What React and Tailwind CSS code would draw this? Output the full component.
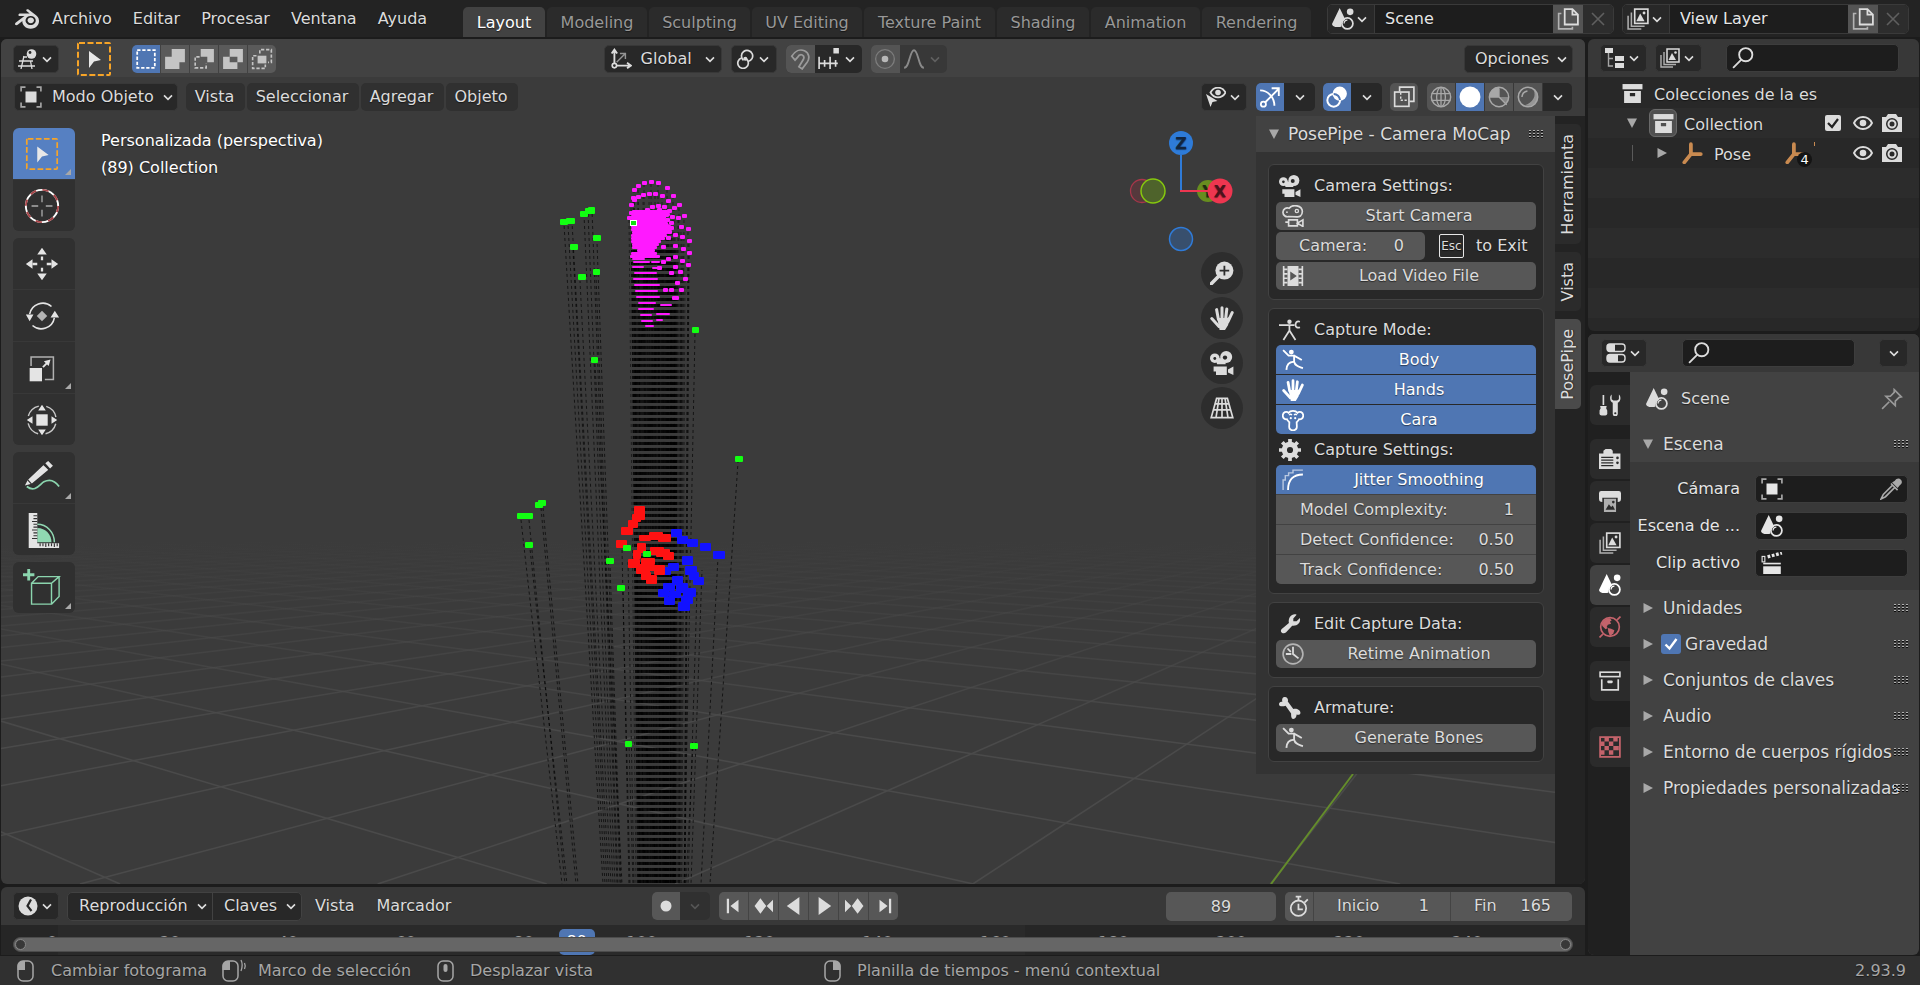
import React from 'react';
import { SiBlender } from 'react-icons/si';

/* ---------- icons (20 x 20 grid, drawn in the current text colour) ---------- */

const line = { fill: 'none', stroke: 'currentColor' };

const shapes = {
    chevron: <path d="M5 8l5 5 5-5" {...line} strokeWidth="2" />,
    view3d: (
        <>
            <path d="M1 12h14M0 17h17M6 7L3 20M12.5 12L14 20M5 8h4" {...line} strokeWidth="1.3" />
            <circle cx="13.5" cy="5" r="4.8" fill="currentColor" />
            <circle cx="12" cy="3.5" r="1.4" fill="#282828" />
        </>
    ),
    selNew: <rect x="2" y="2" width="16" height="16" {...line} strokeWidth="1.6" strokeDasharray="3 1.6" />,
    selAdd: <path d="M7 1h12v12h-5v6H1V8h6z" fill="currentColor" />,
    selSub: (
        <>
            <path d="M7 1h12v12h-6V8H7z" fill="currentColor" />
            <path d="M6 8H2v10h10v-4" {...line} strokeWidth="1.5" strokeDasharray="3 1.6" />
        </>
    ),
    selDiff: <path fillRule="evenodd" d="M7 1h12v12h-5v6H1V8h6zM7 8v5h7V8z" fill="currentColor" />,
    selAnd: (
        <>
            <rect x="6" y="7" width="8" height="7" fill="currentColor" />
            <path d="M8 5V1.5h10.5V13h-3M5 7H1.5v11.5H13V15" {...line} strokeWidth="1.5" strokeDasharray="3 1.6" />
        </>
    ),
    axes: (
        <>
            <path d="M4 14V2M1.5 5L4 1.5 6.5 5M6 16h12M15.5 13.5L19 16l-3.5 2.5" {...line} strokeWidth="1.7" />
            <circle cx="4" cy="16" r="2" {...line} strokeWidth="1.5" />
            <path d="M6 13l7.5-7.5M9 5h5v5" {...line} strokeWidth="1.3" opacity=".6" />
        </>
    ),
    pivot: (
        <>
            <path d="M8.500 11.300A5.600 5.600 0 1 1 13 12.500" {...line} strokeWidth="1.700" />
            <path d="M12 9.500A5.300 5.300 0 1 1 7 8.500" {...line} strokeWidth="1.700" transform="translate(-.5 .5)" />
            <circle cx="10.300" cy="9.800" r="2" fill="currentColor" />
        </>
    ),
    magnet: (
        <path d="M2.5 7.5C5.5 2.5 10 .8 14 2.5c4.500 2 5 7 2.500 10.500L12 19l-3-2 4-6.500c1-2 .4-3.500-1-4.200-1.500-.7-3 0-4.500 2.500L5.500 11z" {...line} strokeWidth="1.6" />
    ),
    snapInc: (
        <>
            <path d="M1 8v11M6 11v6M11 8v11M16 11v6M1 14h17" {...line} strokeWidth="1.5" />
            <rect x="14" y="0" width="5" height="5" fill="currentColor" />
        </>
    ),
    propEdit: (
        <>
            <circle cx="10" cy="10" r="8.5" {...line} strokeWidth="1.2" opacity=".4" />
            <circle cx="10" cy="10" r="3" fill="currentColor" />
        </>
    ),
    falloff: <path d="M1 18c5 0 5-16 9-16s4 16 9 16" {...line} strokeWidth="1.7" />,
    object: (
        <>
            <rect x="5" y="5" width="10" height="10" fill="currentColor" />
            <path d="M1 5V1h4M15 1h4v4M19 15v4h-4M5 19H1v-4" {...line} strokeWidth="1.5" opacity=".7" />
        </>
    ),
    eyeCursor: (
        <>
            <path d="M4.5 5.5C8-1 16-1 19.5 5.5 16 12 8 12 4.5 5.5z" {...line} strokeWidth="1.8" />
            <circle cx="12" cy="5.5" r="2.8" fill="currentColor" />
            <path d="M0 7l4.500 13 2-5 5-1z" fill="currentColor" />
        </>
    ),
    gizmo: (
        <>
            <path d="M1 4c7 0 13 6 13 14" {...line} strokeWidth="1.7" />
            <path d="M5.500 15L18 2.500M11.500 2H18v7" {...line} strokeWidth="1.7" />
            <circle cx="4" cy="16.5" r="2.3" {...line} strokeWidth="1.6" />
        </>
    ),
    overlays: (
        <>
            <circle cx="12.5" cy="7" r="6.5" fill="currentColor" />
            <circle cx="7" cy="13" r="5.8" {...line} strokeWidth="1.8" />
            <path d="M7 7.200a5.800 5.800 0 0 1 5.700 5.600" fill="none" stroke="#4f76b3" strokeWidth="1.8" />
        </>
    ),
    xray: (
        <>
            <path d="M6 5V1h13v13h-4" {...line} strokeWidth="1.5" />
            <rect x="1.5" y="5.5" width="13" height="13" {...line} strokeWidth="1.5" />
            <path d="M7 6v7h7" {...line} strokeWidth="1.3" strokeDasharray="2 1.5" />
        </>
    ),
    wire: (
        <>
            <circle cx="10" cy="10" r="8.8" {...line} strokeWidth="1.3" />
            <ellipse cx="10" cy="10" rx="4" ry="8.8" {...line} strokeWidth="1.2" />
            <path d="M1.500 7h17M1.500 13h17M10 1v18" {...line} strokeWidth="1.2" />
        </>
    ),
    solid: <circle cx="10" cy="10" r="9.5" fill="currentColor" />,
    material: (
        <>
            <circle cx="10" cy="10" r="8.8" {...line} strokeWidth="1.3" />
            <path d="M10 1v9H1a9 9 0 0 1 9-9z" fill="currentColor" />
            <path d="M10 10h9a9 9 0 0 1-3 6.700z" fill="currentColor" opacity=".6" />
            <path d="M10 10l7 7M1.500 10H10v-8" {...line} strokeWidth="1.2" />
        </>
    ),
    rendered: (
        <>
            <circle cx="10" cy="10" r="8.8" {...line} strokeWidth="1.4" />
            <path d="M4.500 10a6 6 0 0 1 5-5.500" {...line} strokeWidth="1.4" />
            <path d="M15 3.500c3 6-1 12-8 14 6 2 12-2 11.500-8C18.500 6 17 4.500 15 3.500z" fill="currentColor" opacity=".8" />
        </>
    ),
    scene: (
        <>
            <path d="M7 0l5 10.500a6 6 0 0 0-3.500 6.500C4 18 0 17 0 14.500z" fill="currentColor" />
            <circle cx="16.5" cy="3.5" r="3" fill="currentColor" />
            <circle cx="14" cy="14" r="5" {...line} strokeWidth="1.6" />
            <path d="M11 14a3 3 0 0 1 3-3" {...line} strokeWidth="1.2" />
        </>
    ),
    layers: (
        <>
            <rect x="7" y="1" width="12" height="13" {...line} strokeWidth="1.5" />
            <path d="M8.500 12l3.500-7 4 7z" fill="currentColor" />
            <circle cx="15.5" cy="4.5" r="1.3" fill="currentColor" />
            <path d="M4 4v12.500h12M1 7v12h12" {...line} strokeWidth="1.4" opacity=".75" />
        </>
    ),
    copy: (
        <>
            <path d="M7 1h7l5 5v9H7zM14 1v5h5" {...line} strokeWidth="1.6" />
            <path d="M4 5H1.500v14H14v-2" {...line} strokeWidth="1.5" opacity=".7" />
        </>
    ),
    close: <path d="M4 4l12 12M16 4L4 16" {...line} strokeWidth="1.6" />,
    tree: (
        <>
            <rect x="0" y="0" width="8" height="5" fill="currentColor" />
            <rect x="10" y="8" width="9" height="5" fill="currentColor" />
            <rect x="10" y="15" width="9" height="5" fill="currentColor" />
            <path d="M3.500 5v13H8M3.500 10.500H8" {...line} strokeWidth="1.4" opacity=".7" />
        </>
    ),
    search: (
        <>
            <circle cx="12.5" cy="7" r="6" {...line} strokeWidth="1.7" />
            <path d="M8.500 11.500L1 19" {...line} strokeWidth="1.7" />
        </>
    ),
    collection: (
        <>
            <rect x="0.5" y="1" width="19" height="5" fill="currentColor" />
            <path fillRule="evenodd" d="M2 7.500h16V19H2zM7.500 9.500v3h5v-3z" fill="currentColor" />
        </>
    ),
    box: (
        <>
            <rect x="1" y="2" width="18" height="4" {...line} strokeWidth="1.5" />
            <path d="M2.500 8.500V18h15V8.500" {...line} strokeWidth="1.5" />
            <rect x="7.5" y="9.5" width="5" height="2.5" rx="1" fill="currentColor" />
        </>
    ),
    eye: (
        <>
            <path d="M1 10c4-8 14-8 18 0-4 8-14 8-18 0z" {...line} strokeWidth="1.9" />
            <circle cx="10" cy="10" r="3.3" fill="currentColor" />
        </>
    ),
    photo: (
        <>
            <path fillRule="evenodd" d="M0 4h4l2-3h8l2 3h4v15H0zM10 5a6 6 0 1 0 0 12 6 6 0 0 0 0-12z" fill="currentColor" />
            <circle cx="10" cy="11" r="3.5" {...line} strokeWidth="2" />
        </>
    ),
    empty: <path d="M9 2v9M9 11h9M9 11l-6 7.500" {...line} strokeWidth="3.4" strokeLinecap="round" />,
    toggles: (
        <>
            <rect x="1" y="1" width="18" height="7.5" rx="3" {...line} strokeWidth="1.4" />
            <path d="M4 1h5v7.500H4a3 3 0 0 1-3-3V4a3 3 0 0 1 3-3z" fill="currentColor" />
            <rect x="1" y="11.5" width="18" height="7.5" rx="3" {...line} strokeWidth="1.4" />
            <path d="M4 11.500h8V19H4a3 3 0 0 1-3-3v-1.500a3 3 0 0 1 3-3z" fill="currentColor" />
        </>
    ),
    tools: (
        <>
            <path d="M4 1v9" {...line} strokeWidth="1.5" />
            <path d="M1 11h6l-.5 2 1 2v2a2 2 0 0 1-2 2.500h-3A2 2 0 0 1 .5 17v-2l1-2z" fill="currentColor" />
            <path fillRule="evenodd" d="M11.500.5C9.500 2 9.500 6.500 12.500 8v10a2.300 2.300 0 0 0 4.600 0V8c3-1.500 3-6 1-7.500v4.200l-1.600 1.300h-3.400l-1.600-1.300zM14.800 16.500a1 1 0 1 0 0 2 1 1 0 0 0 0-2z" fill="currentColor" />
        </>
    ),
    render: (
        <>
            <path d="M4 5V2.500L6 1h5l1.500 1.500V5H19.500v14H0V5zM16.500 2.500h3" fill="currentColor" />
            <path d="M2 8.500h11M2 11h11M2 13.500h11M2 16h11" stroke="#2b2b2b" strokeWidth="1.2" />
            <circle cx="16.8" cy="9" r="1.2" fill="#2b2b2b" />
            <circle cx="16.8" cy="13.5" r="1.2" fill="#2b2b2b" />
        </>
    ),
    printer: (
        <>
            <path d="M2 1h16a2 2 0 0 1 2 2v5a3 3 0 0 1-3 3V7H3v4a3 3 0 0 1-3-3V3a2 2 0 0 1 2-2z" fill="currentColor" />
            <path d="M4.500 8h11v12h-11z" fill="currentColor" opacity=".75" />
            <path d="M6 18l3-5 2 2.500 1.500-1.500 2 4z" fill="#2b2b2b" />
            <circle cx="13" cy="11" r="1.2" fill="#2b2b2b" />
        </>
    ),
    world: (
        <>
            <circle cx="10" cy="10" r="8.5" {...line} strokeWidth="1.5" />
            <path d="M2.500 7C4 3.500 7 2 10 2l1.500 2L10 5l1 2-3 1-1 2 1 1-2 1-3-3z" fill="currentColor" />
            <path d="M8 11l3 .500 3 1.500-1 3-3 2.500-1.500-4z" fill="currentColor" />
            <path d="M.5 19.500l3-3M16.500 3.500l3-3" {...line} strokeWidth="1.5" />
        </>
    ),
    texture: (
        <>
            <rect x="1" y="1" width="18" height="18" {...line} strokeWidth="1.6" />
            <path d="M5 1h4v4H5zM13 1h4v4h-4zM1 5h4v4H1zM9 5h4v4H9zM5 9h4v4H5zM13 9h5v4h-5zM1 13h4v4H1zM9 13h4v4H9z" fill="currentColor" />
        </>
    ),
    pin: <path d="M12 1.500l6.500 6.500-2 .5-3.500 3.500v4l-3-3-2.500-2.500L4.500 7.500h4L12 4zM7.500 12.500L1 19" {...line} strokeWidth="1.5" />,
    dropper: (
        <>
            <path d="M11 4l2.500-1.500C15 0 17.500 0 19 1.500s1 4-1 5L16 9z" fill="currentColor" />
            <path d="M11.500 6.500L3 15l-2 4 4-2 8.500-8.500M10 5l6 6" {...line} strokeWidth="1.5" />
        </>
    ),
    clip: (
        <>
            <rect x="2" y="13" width="16" height="7" fill="currentColor" />
            <path d="M2 10.500h16" {...line} strokeWidth="1.5" />
            <rect x="1" y="4" width="2.5" height="5" {...line} strokeWidth="1" />
            <path d="M6 4.500L19 .8" {...line} strokeWidth="3" strokeDasharray="2.5 1.5" />
        </>
    ),
    movie: (
        <>
            <circle cx="4" cy="6" r="4" fill="currentColor" />
            <circle cx="13.5" cy="5" r="5" fill="currentColor" />
            <path d="M4 6h9v5H6z" fill="currentColor" />
            <circle cx="4" cy="6.2" r="1.2" fill="#282828" />
            <circle cx="12.5" cy="5.5" r="1.8" fill="#282828" />
            <path d="M3 13h11v7H5v-3H3zM15 15.500l4.500-2.500v7L15 18z" fill="currentColor" />
        </>
    ),
    movieLine: (
        <>
            <path d="M6 10.500a4 4 0 1 1 .5-7.500c3-4 12-3 12 3 0 4-3 5-5 4.800z" {...line} strokeWidth="1.5" />
            <circle cx="13.5" cy="5.5" r="1.5" {...line} strokeWidth="1.2" />
            <circle cx="4.5" cy="6.5" r=".8" fill="currentColor" />
            <path d="M6 13.500h8v5.500H6zM3 15.500h3M14 16.500l5-3v6z" {...line} strokeWidth="1.5" />
        </>
    ),
    film: (
        <>
            <path d="M1.500 1v18M18.500 1v18M1 4h4M1 8h4M1 12h4M1 16h4M15 4h4M15 8h4M15 12h4M15 16h4" {...line} strokeWidth="1.5" />
            <path fillRule="evenodd" d="M5 1h10v18H5zM7.500 6v8l6-4z" fill="currentColor" />
        </>
    ),
    pose: (
        <>
            <circle cx="9.5" cy="2.5" r="2" fill="currentColor" />
            <path d="M0 5.500h9.500v5L4 19M9.500 5.500H14M9.500 10.500L15 19M19 2.500c-3-1-4 1-4 3s2 3 4 2" {...line} strokeWidth="1.6" />
        </>
    ),
    runner: (
        <>
            <circle cx="8.5" cy="2.8" r="2.2" fill="currentColor" />
            <path d="M1 1l5 5h5v5.500M11 6l7 4M11 11.500C6 12 4.500 14 4 19M11 11.500c1 4 4 4.500 8 6" {...line} strokeWidth="1.7" />
        </>
    ),
    hand: (
        <>
            <path d="M6 10l8 0 3-1-2 7-2.500 4H8z" fill="currentColor" />
            <path d="M7 11L5.500 3M10 11V1.500M13 11l1-8.500M15 13l3.500-7.500M7.500 17L1.500 10.500" {...line} strokeWidth="2.5" strokeLinecap="round" />
        </>
    ),
    monkey: (
        <>
            <path d="M6 3.500C7.500 1 12.500 1 14 3.500c2-2 5.300-.5 5.300 2.500 0 2.500-1.800 3.500-3.800 3.300-.5 1.200-1.500 2-2.200 2.700l.2 4c0 4.500-7 4.500-7 0l.2-4c-.700-.7-1.700-1.500-2.200-2.700C2.500 9.500.7 8.500.7 6 .7 3 4 1.500 6 3.500z" {...line} strokeWidth="1.6" />
            <path d="M6.500 5.500c.7-1 1.800-1 2.500 0M11 5.500c.7-1 1.800-1 2.500 0" {...line} strokeWidth="1.2" />
            <circle cx="8" cy="8.300" r="1" fill="currentColor" />
            <circle cx="12" cy="8.300" r="1" fill="currentColor" />
        </>
    ),
    gear: (
        <>
            <circle cx="10" cy="10" r="5" {...line} strokeWidth="5" />
            <path d="M10 0v20M0 10h20M3 3l14 14M17 3L3 17" stroke="currentColor" strokeWidth="3.4" />
            <circle cx="10" cy="10" r="2.8" fill="#282828" />
        </>
    ),
    smooth: (
        <>
            <path d="M5.500 19C5.500 10 10 5 19 5" {...line} strokeWidth="1.7" />
            <path d="M1 19V10h2V6h3V3.500h4V1h9" {...line} strokeWidth="1.3" opacity=".6" />
        </>
    ),
    wrench: (
        <path d="M2.500 14.500L9 9C8 4 12 0 16 1.500L13 5v2.500h3L19 4.500C20 9 16.500 12 12 11.500L6.500 17.500c-2.500 2.500-6.500-.5-4-3z" fill="currentColor" />
    ),
    clock: (
        <>
            <circle cx="10" cy="10" r="9" {...line} strokeWidth="1.5" opacity=".7" />
            <path d="M10 3.500V10l5 4M8.500 10H3.500M8 8L5 5" {...line} strokeWidth="1.6" />
        </>
    ),
    bone: (
        <path d="M5 0a3 3 0 0 1 3 4l5 7c3-1 6.500 1 6.500 3.500 0 1.500-2 2-3.500 1.500 0 2-1 4-3 4s-2-3-2-5L6 8C3 9 0 8.500 0 6.500 0 5 1.500 4 3 4.500 2.500 2.500 3 0 5 0z" fill="currentColor" />
    ),
    zoom: (
        <>
            <circle cx="12" cy="8" r="7.5" fill="currentColor" />
            <path d="M7 13l-6 6" {...line} strokeWidth="3" strokeLinecap="round" />
            <path d="M12 4v8M8 8h8" stroke="#2d2d2d" strokeWidth="1.5" />
        </>
    ),
    persp: (
        <path d="M5.500 2h9L19 18H1zM10 2v16M4.500 6.500h11M3 11.500h14M7.500 2L5 18M12.500 2L15 18" {...line} strokeWidth="1.4" />
    ),
    time: (
        <>
            <circle cx="10" cy="10" r="9.5" fill="currentColor" />
            <path d="M13 3.500L9.500 10l4 5" fill="none" stroke="#282828" strokeWidth="2.2" />
        </>
    ),
    stopwatch: (
        <>
            <circle cx="9.5" cy="12" r="7" {...line} strokeWidth="1.6" />
            <path d="M7 1.500h5M9.500 1.500V5M15 7l3-3M9.500 8v5h4" {...line} strokeWidth="1.6" />
        </>
    ),
    record: <circle cx="10" cy="10" r="5.5" fill="currentColor" />,
    first: <path d="M2 2h2.500v16H2zM15 3v14l-9-7z" fill="currentColor" />,
    prevKey: <path d="M6 1.500l6.500 8.500L6 18.500-.5 10zM20 3v14l-7-7z" fill="currentColor" />,
    playBack: <path d="M16 0v20L2 10z" fill="currentColor" />,
    play: <path d="M4 0v20l14-10z" fill="currentColor" />,
    nextKey: <path d="M14 1.500l6.500 8.500-6.500 8.500L7.500 10zM0 3v14l7-7z" fill="currentColor" />,
    last: <path d="M15.500 2H18v16h-2.500zM5 3v14l9-7z" fill="currentColor" />,
};

const Icon = ({ name, className = 'size-5' }) => (
    <svg viewBox="0 0 20 20" className={`shrink-0 ${className}`} aria-hidden="true">
        {shapes[name]}
    </svg>
);

const Chevron = ({ className = '' }) => <Icon name="chevron" className={`size-4 ${className}`} />;

const Mouse = ({ button, drag }) => (
    <svg viewBox="0 0 26 24" className="h-6 w-[26px] shrink-0" aria-hidden="true">
        <rect x="2" y="2" width="15" height="20" rx="5" fill="none" stroke="currentColor" strokeWidth="1.5" />
        {button === 'left' && <path d="M1.500 11V7a5 5 0 0 1 5-5H9v9z" fill="currentColor" />}
        {button === 'right' && <path d="M17.500 11V7a5 5 0 0 0-5-5H10v9z" fill="currentColor" />}
        {button === 'middle' && <rect x="7.500" y="5" width="4" height="8" rx="2" fill="currentColor" />}
        {drag && <path d="M20 1c1.500 3 1.500 7 0 11M23.500 4c1 2 1 4 0 6" fill="none" stroke="currentColor" strokeWidth="1.3" />}
    </svg>
);

/* ---------- small building blocks ---------- */

const menuBtn = 'flex h-7 items-center rounded-[5px] border border-[#383838] bg-[#282828]';
const field = 'h-7 rounded-[5px] border border-[#3d3d3d] bg-[#1d1d1d]';

const IconMenu = ({ icon, label, className = 'w-[46px]' }) => (
    <button aria-label={label} className={`${menuBtn} justify-center gap-px ${className}`}>
        <Icon name={icon} />
        <Chevron />
    </button>
);

const Grip = () => (
    <svg viewBox="0 0 15 8" className="ml-auto h-2 w-[15px] shrink-0" shapeRendering="crispEdges" aria-hidden="true">
        {[0, 4, 8, 12].map((x) => (
            <g key={x}>
                <path d={`M${x} 1.500h2M${x} 4.500h2M${x} 7.500h2`} stroke="#0c0c0c" />
                <path d={`M${x} 0.500h2M${x} 3.500h2M${x} 6.500h2`} stroke="#b0b0b0" />
            </g>
        ))}
    </svg>
);

const Triangle = ({ open }) => (
    <svg viewBox="0 0 10 10" className="size-2.5 shrink-0 text-[#a8a8a8]" aria-hidden="true">
        <path d={open ? 'M0 0.500h10L5 10z' : 'M0.500 0v10L10 5z'} fill="currentColor" />
    </svg>
);

/* ---------- top bar ---------- */

const menus = ['Archivo', 'Editar', 'Procesar', 'Ventana', 'Ayuda'];

const workspaces = [
    ['Layout', 'w-[82px]'],
    ['Modeling', 'w-[100px]'],
    ['Sculpting', 'w-[101px]'],
    ['UV Editing', 'w-[110px]'],
    ['Texture Paint', 'w-[131px]'],
    ['Shading', 'w-[92px]'],
    ['Animation', 'w-[109px]'],
    ['Rendering', 'w-[109px]'],
];

const DataBlock = ({ icon, value }) => (
    <div className="flex h-[30px] w-[287px] overflow-hidden rounded-[5px] border border-[#3a3a3a] bg-[#1d1d1d]">
        <button aria-label={`Browse ${value}`} className="flex w-[47px] items-center justify-center border-r border-[#3a3a3a] bg-[#282828]">
            <Icon name={icon} className="size-[22px]" />
            <Chevron />
        </button>
        <input aria-label={value} defaultValue={value} className="w-0 min-w-0 flex-1 bg-transparent px-2.5 text-[#e6e6e6]" />
        <button aria-label={`New ${value}`} className="flex w-[30px] items-center justify-center bg-[#545454]">
            <Icon name="copy" className="size-[22px]" />
        </button>
        <button aria-label={`Remove ${value}`} className="flex w-[30px] items-center justify-center bg-[#2d2d2d] text-[#5f5f5f]">
            <Icon name="close" />
        </button>
    </div>
);

const TopBar = () => (
    <header className="flex h-[37px] shrink-0 bg-[#232323] pl-[15px]">
        <SiBlender className="mt-[7px] size-6 shrink-0 text-[#dcdcdc]" />
        <nav className="ml-[13px] flex h-[38px] w-[411px] items-center gap-[21px]">
            {menus.map((m) => (
                <button key={m}>{m}</button>
            ))}
        </nav>
        <div role="tablist" className="flex gap-0.5 pt-[7px]">
            {workspaces.map(([name, width], i) => (
                <button
                    key={name}
                    role="tab"
                    aria-selected={i === 0}
                    className={`h-[30px] whitespace-nowrap rounded-t-[5px] pt-0.5 ${width} ${i === 0 ? 'bg-[#424242] text-white' : 'bg-[#2b2b2b] text-[#989898]'}`}
                >
                    {name}
                </button>
            ))}
        </div>
        <div className="ml-auto flex gap-2 pr-[11px] pt-1">
            <DataBlock icon="scene" value="Scene" />
            <DataBlock icon="layers" value="View Layer" />
        </div>
    </header>
);

/* ---------- 3D viewport ---------- */

const HORIZON = 485;
const gridB = Array.from({ length: 34 }, (_, i) => 80 + 297.6 * (i - 28));
const gridA = Array.from({ length: 34 }, (_, i) => 120 + 426.7 * (i - 1));

// Tracker helpers: every point hangs on a dashed line down to its parent.
const strings = [
    [564, 224, 603], [568, 224, 605], [572, 222, 609], [573, 250, 607], [580, 281, 611],
    [584, 214, 613], [588, 212, 615], [592, 210, 617], [597, 242, 620], [596, 275, 618], [595, 363, 622],
    [521, 520, 562], [529, 520, 565], [530, 549, 567], [541, 508, 576], [543, 508, 578],
    [610, 565, 621], [622, 548, 629], [623, 592, 630], [628, 560, 634], [629, 745, 633],
    [695, 333, 684], [738, 462, 710], [718, 557, 701], [702, 570, 691], [697, 590, 688], [693, 745, 686],
];

const faceOutline = [
    [634, 190], [638, 186], [644, 183], [651, 182], [658, 183], [667, 188], [673, 196], [679, 205],
    [684, 216], [688, 229], [689, 241], [689, 253], [688, 265], [685, 279], [681, 290], [676, 298],
    [633, 198], [638, 197], [643, 195], [649, 194], [655, 194], [662, 196], [668, 201], [674, 208],
    [678, 218], [681, 227], [682, 237], [683, 249], [682, 261], [680, 272], [677, 283], [671, 290],
    [631, 205], [634, 200], [652, 207], [658, 206], [664, 207], [669, 211], [672, 217], [671, 228],
    [675, 235], [675, 246], [675, 257], [675, 267], [671, 273], [665, 290], [631, 213], [629, 218],
    [663, 247], [668, 259], [663, 262], [659, 268], [667, 220], [661, 212], [671, 223], [674, 298],
    [647, 210], [654, 212], [659, 210], [666, 215], [669, 232], [666, 226], [668, 238],
];

const faceRows = [
    [632, 210, 38], [631, 213, 39], [630, 216, 36], [631, 219, 37], [630, 222, 38], [631, 225, 40],
    [631, 228, 39], [632, 231, 36], [631, 234, 36], [631, 237, 34], [631, 240, 30], [632, 243, 27],
    [632, 246, 25], [637, 249, 18], [631, 252, 26], [630, 255, 30], [632, 258, 13], [651, 261, 9],
    [633, 261, 17], [632, 266, 12], [652, 267, 10], [634, 272, 23], [633, 278, 25], [634, 284, 26],
    [635, 290, 23], [636, 296, 24], [638, 302, 18], [660, 304, 12], [638, 308, 16], [640, 314, 12],
    [656, 313, 14], [641, 320, 12], [656, 319, 7], [645, 325, 9],
];

const greens = [
    [560, 219, 8, 6], [566, 218, 9, 6], [580, 211, 8, 6], [585, 208, 10, 6], [588, 207, 7, 6], [593, 235, 8, 6],
    [570, 244, 8, 6], [593, 269, 7, 6], [578, 274, 8, 6], [591, 357, 7, 6], [692, 327, 7, 6], [735, 456, 8, 6],
    [517, 513, 16, 6], [535, 502, 8, 6], [538, 500, 8, 6], [525, 542, 8, 6], [606, 558, 8, 6],
    [623, 545, 8, 6], [643, 551, 8, 6], [617, 585, 8, 6], [625, 741, 7, 6], [690, 743, 8, 6],
];

const reds = [
    [634, 506, 11, 14], [632, 514, 9, 8], [628, 520, 10, 8], [621, 527, 12, 8], [616, 540, 11, 8],
    [639, 535, 12, 6], [649, 532, 14, 8], [658, 534, 13, 8], [637, 543, 9, 10], [633, 550, 8, 9],
    [650, 547, 14, 8], [656, 549, 14, 8], [663, 552, 11, 8], [628, 559, 12, 9], [641, 558, 14, 7],
    [636, 564, 14, 10], [645, 565, 20, 6], [641, 572, 10, 8], [646, 575, 11, 9], [654, 567, 11, 8],
];

const blues = [
    [671, 529, 11, 8], [677, 536, 11, 8], [687, 539, 11, 8], [700, 543, 11, 8], [713, 551, 12, 8],
    [682, 556, 11, 9], [668, 563, 11, 8], [662, 567, 9, 8], [685, 566, 12, 9], [689, 572, 10, 8], [693, 577, 11, 8],
    [672, 576, 11, 9], [663, 583, 12, 8], [658, 589, 11, 8], [676, 583, 12, 10], [669, 591, 12, 7],
    [664, 597, 11, 8], [683, 588, 13, 9], [681, 596, 12, 8], [678, 602, 12, 9],
];

const Marks = ({ list, color }) => (
    <g fill={color}>
        {list.map(([x, y, w, h], i) => (
            <rect key={i} x={x} y={y} width={w} height={h} rx="1" />
        ))}
    </g>
);

const Dashes = ({ list, opacity }) => (
    <g stroke="#000" strokeOpacity={opacity} strokeDasharray="3 3">
        {list.map(([x, y, end], i) => (
            <line key={i} x1={x} y1={y} x2={end} y2="884" strokeDashoffset={(y - 4) % 6} />
        ))}
    </g>
);

const Scene3D = () => {
    const settle = (x) => 661 + (x - 659.5) * 0.82;
    const mesh = faceOutline.map(([x, y]) => [x, y, settle(x)]);
    const core = Array.from({ length: 42 }, (_, i) => [632 + i * 1.1, 250, settle(632 + i * 1.1)]);

    return (
        <svg
            viewBox="1 39 1584 845"
            preserveAspectRatio="xMidYMid slice"
            className="absolute inset-0 size-full"
            aria-hidden="true"
        >
            <defs>
                <linearGradient id="fade" x1="0" x2="0" y1="540" y2="740" gradientUnits="userSpaceOnUse">
                    <stop offset="0" stopColor="#4a4a4a" stopOpacity="0" />
                    <stop offset="0.4" stopColor="#4a4a4a" stopOpacity="0.4" />
                    <stop offset="1" stopColor="#4a4a4a" stopOpacity="1" />
                </linearGradient>
            </defs>
            <g stroke="url(#fade)" strokeWidth="1.5">
                {gridB.map((x) => (
                    <line key={x} x1="1583" y1={HORIZON} x2={x} y2="884" />
                ))}
                {gridA.map((x) => (
                    <line key={x} x1="-790" y1={HORIZON} x2={x} y2="884" />
                ))}
            </g>
            <line x1="1353" y1="774" x2="1271" y2="884" stroke="#648c2b" strokeWidth="2" />

            <Dashes list={strings} opacity="0.65" />
            <Dashes list={mesh} opacity="0.5" />
            <Dashes list={core} opacity="0.95" />

            <Marks list={faceRows.map(([x, y, w]) => [x, y, w, y < 258 ? 3 : 2])} color="#ff19ff" />
            <Marks list={faceOutline.map(([x, y]) => [x - 2, y - 2, 5, 4])} color="#ff19ff" />
            <Marks list={blues} color="#1212ff" />
            <Marks list={reds} color="#ff1212" />
            <Marks list={greens} color="#12ff12" />
            <rect x="630.5" y="220.5" width="6" height="5" fill="#12e012" stroke="#fff" />
        </svg>
    );
};

const Gizmo = () => (
    <svg viewBox="1128 126 115 126" className="h-[126px] w-[115px]" aria-hidden="true">
        <circle cx="1142" cy="191" r="11.5" fill="#55383c" stroke="#a8364a" strokeWidth="1.3" />
        <circle cx="1153" cy="191" r="12" fill="#4e632b" stroke="#86c80e" strokeWidth="1.5" />
        <circle cx="1181" cy="239" r="11.5" fill="#384f6d" stroke="#2f7bd8" strokeWidth="1.5" />
        <path d="M1181 191h27" stroke="#79912a" strokeWidth="2" />
        <circle cx="1208" cy="191" r="11" fill="#678d1f" />
        <text x="1208" y="197" textAnchor="middle" fontSize="15" fontWeight="bold" fill="#1f2a10">Y</text>
        <path d="M1181 191V155" stroke="#2f7bd8" strokeWidth="2" />
        <path d="M1180 191h30" stroke="#ee3650" strokeWidth="2" />
        <circle cx="1181" cy="143" r="12" fill="#2e7bd8" />
        <circle cx="1220" cy="191" r="12.5" fill="#ee3650" />
        <text x="1181" y="149" textAnchor="middle" fontSize="16" fontWeight="bold" fill="#12253f">Z</text>
        <text x="1220" y="197" textAnchor="middle" fontSize="16" fontWeight="bold" fill="#4c121b">X</text>
    </svg>
);

const SelectBox = ({ className }) => (
    <svg viewBox="0 0 34 34" className={className} aria-hidden="true">
        <rect x="1" y="1" width="32" height="32" rx="1" fill="none" stroke="#f7a427" strokeWidth="2" strokeDasharray="6 2.5" />
        <path d="M12 9l12 9-7 1.500L12 26z" fill="#e8e8e8" />
    </svg>
);

const ToolSettings = () => (
    <div className="relative flex h-[38px] items-center bg-[#424242] px-3 pt-0.5">
        <IconMenu icon="view3d" label="Editor type" />
        <button aria-label="Select Box" className="ml-[18px]">
            <SelectBox className="size-[34px]" />
        </button>
        <div className="ml-[21px] flex h-7 gap-px overflow-hidden rounded-[5px]">
            {['selNew', 'selAdd', 'selSub', 'selDiff', 'selAnd'].map((icon, i) => (
                <button
                    key={icon}
                    aria-label={icon}
                    className={`flex w-7 items-center justify-center ${i === 0 ? 'bg-[#4f76b3] text-white' : 'bg-[#5a5a5a] text-[#c4c4c4]'}`}
                >
                    <Icon name={icon} className="size-[22px]" />
                </button>
            ))}
        </div>
        <div className="flex-[328]" />
        <div className="relative flex items-center">
            <Icon name="axes" className="pointer-events-none absolute left-1.5 size-[22px]" />
            <select aria-label="Orientation" className={`${menuBtn} w-[118px] appearance-none pl-9`}>
                <option>Global</option>
            </select>
            <Chevron className="pointer-events-none absolute right-1" />
        </div>
        <IconMenu icon="pivot" label="Pivot point" className="ml-[9px] w-[46px]" />
        <div className="ml-[9px] flex h-7 w-[76px] overflow-hidden rounded-[5px] bg-[#282828]">
            <button aria-label="Snap" className="flex w-[29px] items-center justify-center bg-[#545454] text-[#9a9a9a]">
                <Icon name="magnet" className="size-[22px]" />
            </button>
            <button aria-label="Snap to" className="flex flex-1 items-center justify-center gap-0.5">
                <Icon name="snapInc" className="size-[22px]" />
                <Chevron />
            </button>
        </div>
        <div className="ml-[9px] flex h-7 w-[76px] overflow-hidden rounded-[5px] bg-[#383838]">
            <button aria-label="Proportional editing" className="flex w-[29px] items-center justify-center bg-[#545454] text-[#b8b8b8]">
                <Icon name="propEdit" className="size-[22px]" />
            </button>
            <button aria-label="Falloff" className="flex flex-1 items-center justify-center gap-0.5 text-[#8a8a8a]">
                <Icon name="falloff" className="size-[22px]" />
                <Chevron className="text-[#606060]" />
            </button>
        </div>
        <div className="flex-[518]" />
        <button className={`${menuBtn} w-[109px] justify-between pl-2.5 pr-0.5`}>
            Opciones
            <Chevron />
        </button>
    </div>
);

const SplitToggle = ({ icon, label, className }) => (
    <div className={`flex h-7 w-[59px] overflow-hidden rounded-[5px] bg-[#282828] ${className}`}>
        <button aria-label={label} className="flex w-7 items-center justify-center bg-[#4f76b3] text-white">
            <Icon name={icon} className="size-[22px]" />
        </button>
        <button aria-label={`${label} options`} className="flex flex-1 items-center justify-center">
            <Chevron />
        </button>
    </div>
);

const ViewHeader = () => (
    <div className="relative flex h-[39px] items-start pl-[13px] pr-[13px] pt-1.5">
        <div className="relative flex items-center">
            <Icon name="object" className="pointer-events-none absolute left-1.5 size-[22px]" />
            <select aria-label="Mode" className={`${menuBtn} w-[164px] appearance-none border-[#4a4a4a] pl-[37px]`}>
                <option>Modo Objeto</option>
            </select>
            <Chevron className="pointer-events-none absolute right-0.5" />
        </div>
        <div className="ml-2 flex gap-0.5">
            {[
                ['Vista', 'w-[59px]'],
                ['Seleccionar', 'w-[112px]'],
                ['Agregar', 'w-[83px]'],
                ['Objeto', 'w-[72px]'],
            ].map(([name, width]) => (
                <button key={name} className={`h-7 rounded-[5px] bg-[#303030] pr-0.5 ${width}`}>
                    {name}
                </button>
            ))}
        </div>
        <div className="flex-1" />
        <IconMenu icon="eyeCursor" label="Visibility" />
        <SplitToggle icon="gizmo" label="Gizmos" className="ml-[9px]" />
        <SplitToggle icon="overlays" label="Overlays" className="ml-2" />
        <button aria-label="X-Ray" className="ml-2 flex h-7 w-7 items-center justify-center rounded-[5px] bg-[#545454]">
            <Icon name="xray" className="size-[22px]" />
        </button>
        <div className="ml-[9px] flex h-7 gap-px overflow-hidden rounded-[5px] bg-[#383838]">
            {['wire', 'solid', 'material', 'rendered'].map((icon) => (
                <button
                    key={icon}
                    aria-label={icon}
                    className={`flex w-7 items-center justify-center ${icon === 'solid' ? 'bg-[#4f76b3] text-white' : 'bg-[#545454] text-[#a8a8a8]'}`}
                >
                    <Icon name={icon} className="size-[22px]" />
                </button>
            ))}
            <button aria-label="Shading options" className="flex w-[29px] items-center justify-center bg-[#282828]">
                <Chevron />
            </button>
        </div>
    </div>
);

/* Left tool shelf */

const toolArt = {
    select: <rect x="4" y="4" width="32" height="32" rx="1" fill="none" stroke="#f7a427" strokeWidth="1.8" strokeDasharray="6 2.5" />,
    cursor3d: (
        <>
            <circle cx="20" cy="20" r="17" fill="none" stroke="#fff" strokeWidth="2" />
            <circle cx="20" cy="20" r="17" fill="none" stroke="#a84448" strokeWidth="2" strokeDasharray="6.67 6.67" />
            <path d="M20 9v7M20 24v7M9 20h7M24 20h7" stroke="#aaa" strokeWidth="1.4" />
        </>
    ),
    move: (
        <>
            <path d="M20 3l5 7H15zM20 37l5-7H15zM3 20l7-5v10zM37 20l-7-5v10z" fill="#e4e4e4" />
            <path d="M20 12v4M20 24v4M10 20h5M25 20h5" stroke="#e4e4e4" strokeWidth="2.4" />
        </>
    ),
    rotate: (
        <>
            <path d="M7 18a14 14 0 0 1 23-8M33 22a14 14 0 0 1-23 8" fill="none" stroke="#e4e4e4" strokeWidth="1.7" />
            <path d="M3 18.500h8l-4 7zM29 21.500h9l-4.500-7z" fill="#e4e4e4" />
            <path d="M20 14.500l5.500 5.500-5.500 5.500-5.500-5.500z" fill="#b4b4b4" />
        </>
    ),
    scale: (
        <>
            <rect x="7" y="20" width="13" height="14" fill="#e4e4e4" />
            <path d="M8.500 18V8.500H32v23.500h-9" fill="none" stroke="#b0b0b0" strokeWidth="1.6" />
            <path d="M21 19l5-5" stroke="#e4e4e4" strokeWidth="2" />
            <path d="M29 11l-2 7-5-5z" fill="#e4e4e4" />
        </>
    ),
    transform: (
        <>
            <circle cx="20" cy="20" r="15" fill="none" stroke="#c8c8c8" strokeWidth="1.5" strokeDasharray="15.6 8" strokeDashoffset="-4" />
            <rect x="14" y="14" width="12" height="12" fill="#e4e4e4" />
            <path d="M20 4l4 6h-8zM20 36l4-6h-8zM4 20l6-4v8zM36 20l-6-4v8z" fill="#e4e4e4" />
        </>
    ),
    annotate: (
        <>
            <path d="M4 29c9 7 14-3 18-5 6-3 11-2 16 5" fill="none" stroke="#8bd5ae" strokeWidth="1.9" />
            <path d="M22 6l5 5L9 26l-7 2 3-6zM23.500 4.500l3-2.500 5 5-3 3z" fill="#e4e4e4" />
            <path d="M21.500 5.500l6 6M5 22l4 4.500" stroke="#303030" strokeWidth="1.3" />
        </>
    ),
    measure: (
        <>
            <path d="M15 18V33h15C30 25 24 18 15 18z" fill="#90d8b2" />
            <path d="M15 14c10 0 18 8 18 19" fill="none" stroke="#90d8b2" strokeWidth="1.6" />
            <path d="M6 2h9v32h23v5H6z" fill="#e4e4e4" />
            <path d="M11 5h4M11 8h4M9.500 11H15M11 14h4M11 17h4M9.500 20H15M11 23h4M11 26h4M9.500 29H15M18 34v3M21 34v3M24 34v4M27 34v3M30 34v3M33 34v4M36 34v3" stroke="#303030" strokeWidth="1.2" />
        </>
    ),
    addCube: (
        <>
            <path d="M9 15h21v22H9zM9 15l7-7h22l-8 7M38 8v21l-8 8" fill="none" stroke="#8bd5ae" strokeWidth="1.5" />
            <path d="M6 0v12M0 6h12" stroke="#8bd5ae" strokeWidth="3" />
        </>
    ),
};

const toolGroups = [
    [['select', true], ['cursor3d']],
    [['move'], ['rotate'], ['scale', true], ['transform']],
    [['annotate', true], ['measure']],
    [['addCube', true]],
];

const ToolShelf = () => (
    <div className="ml-3 mt-3 flex w-[62px] flex-col gap-[7px]">
        {toolGroups.map((group, g) => (
            <div key={g} className="flex flex-col gap-px overflow-hidden rounded-md bg-[#383838]">
                {group.map(([name, more]) => (
                    <button
                        key={name}
                        aria-label={name}
                        className={`relative flex h-[51px] items-center justify-center pr-1 ${name === 'select' ? 'bg-[#5680c2]' : 'bg-[#303030]'}`}
                    >
                        <svg viewBox="0 0 40 40" className="size-[38px]" aria-hidden="true">
                            {toolArt[name]}
                            {name === 'select' && <path d="M15 12l12 9-7 1.500L15 29z" fill="#e8e8e8" />}
                        </svg>
                        {more && (
                            <svg viewBox="0 0 6 6" className="absolute bottom-1 right-1 size-1.5" aria-hidden="true">
                                <path d="M6 0v6H0z" fill="#a8a8a8" />
                            </svg>
                        )}
                    </button>
                ))}
            </div>
        ))}
    </div>
);

/* Side panel */

const panelBtn = 'relative flex w-full items-center justify-center pl-[26px]';

const PanelBox = ({ children }) => (
    <section className="rounded-md border border-[#424242] bg-[#282828] px-[7px] pb-[9px] pt-[7px]">{children}</section>
);

const PanelLabel = ({ icon, children }) => (
    <div className="flex h-7 items-center gap-[13px] pl-[3px]">
        <Icon name={icon} className="size-[22px]" />
        {children}
    </div>
);

const PanelButton = ({ icon, on, children }) => (
    <button
        aria-pressed={on}
        className={on ? `${panelBtn} h-[29px] bg-[#4f76b3] text-white` : `${panelBtn} mt-0.5 h-7 rounded-[5px] bg-[#575757]`}
    >
        <Icon name={icon} className="absolute left-1.5 size-[22px]" />
        {children}
    </button>
);

const NumberRow = ({ label, value }) => (
    <label className="flex h-[29px] items-center bg-[#575757] pl-6 pr-[22px]">
        <span className="whitespace-nowrap">{label}</span>
        <input defaultValue={value} className="w-0 min-w-0 flex-1 bg-transparent text-right" />
    </label>
);

const PosePipePanel = () => (
    <aside className="w-[299px] self-start bg-[#333333] pb-3">
        <div className="flex h-9 items-center bg-[#424242] pl-[13px] pr-[11px]">
            <Triangle open />
            <h2 className="ml-[9px] whitespace-nowrap text-[17px]">PosePipe - Camera MoCap</h2>
            <Grip />
        </div>
        <div className="mt-3 flex flex-col gap-2 pl-3 pr-[11px]">
            <PanelBox>
                <PanelLabel icon="movie">Camera Settings:</PanelLabel>
                <PanelButton icon="movieLine">Start Camera</PanelButton>
                <div className="mt-0.5 flex h-7 items-center">
                    <label className="flex h-7 w-[149px] items-center rounded-[5px] bg-[#575757] pl-[23px] pr-[21px]">
                        Camera:
                        <input defaultValue="0" className="w-0 min-w-0 flex-1 bg-transparent text-right" />
                    </label>
                    <kbd className="ml-3.5 flex h-6 w-[25px] items-center justify-center rounded-xs border border-[#e6e6e6] font-[inherit] text-xs">
                        Esc
                    </kbd>
                    <span className="ml-3">to Exit</span>
                </div>
                <PanelButton icon="film">Load Video File</PanelButton>
            </PanelBox>

            <PanelBox>
                <PanelLabel icon="pose">Capture Mode:</PanelLabel>
                <div className="mt-px flex flex-col gap-px overflow-hidden rounded-[5px]">
                    <PanelButton icon="runner" on>Body</PanelButton>
                    <PanelButton icon="hand" on>Hands</PanelButton>
                    <PanelButton icon="monkey" on>Cara</PanelButton>
                </div>
                <div className="mt-0.5">
                    <PanelLabel icon="gear">Capture Settings:</PanelLabel>
                </div>
                <div className="mt-px flex flex-col gap-px overflow-hidden rounded-[5px] bg-[#424242]">
                    <PanelButton icon="smooth" on>Jitter Smoothing</PanelButton>
                    <NumberRow label="Model Complexity:" value="1" />
                    <NumberRow label="Detect Confidence:" value="0.50" />
                    <NumberRow label="Track Confidence:" value="0.50" />
                </div>
            </PanelBox>

            <PanelBox>
                <PanelLabel icon="wrench">Edit Capture Data:</PanelLabel>
                <PanelButton icon="clock">Retime Animation</PanelButton>
            </PanelBox>

            <PanelBox>
                <PanelLabel icon="bone">Armature:</PanelLabel>
                <PanelButton icon="runner">Generate Bones</PanelButton>
            </PanelBox>
        </div>
    </aside>
);

const sideTabs = [
    ['Herramienta', 'h-[120px]'],
    ['Vista', 'h-[59px]'],
    ['PosePipe', 'h-[90px]'],
];

const Viewport = () => (
    <section className="relative flex min-h-0 flex-1 flex-col overflow-hidden rounded-md bg-[#3b3b3b]">
        <Scene3D />
        <ToolSettings />
        <ViewHeader />
        <div className="relative flex min-h-0 flex-1">
            <ToolShelf />
            <div className="ml-[26px] mt-[11px] leading-[27px] text-white">
                <p>Personalizada (perspectiva)</p>
                <p>(89) Collection</p>
            </div>
            <div className="flex-1" />
            <div className="mr-[13px] mt-2.5 flex flex-col items-end">
                <Gizmo />
                <div className="flex flex-col gap-[3px]">
                    {['zoom', 'hand', 'movie', 'persp'].map((icon) => (
                        <button key={icon} aria-label={icon} className="flex size-[42px] items-center justify-center rounded-full bg-[#2d2d2d]">
                            <Icon name={icon} className="size-6" />
                        </button>
                    ))}
                </div>
            </div>
            <PosePipePanel />
            <div role="tablist" aria-orientation="vertical" className="flex w-[30px] flex-col items-start gap-2 bg-[#232323] pt-2">
                {sideTabs.map(([name, height]) => (
                    <button
                        key={name}
                        role="tab"
                        aria-selected={name === 'PosePipe'}
                        className={`flex w-[26px] items-center justify-center rounded-r-[5px] ${height} ${name === 'PosePipe' ? 'bg-[#4a4a4a]' : 'bg-[#2b2b2b]'}`}
                    >
                        <span className="rotate-180 [writing-mode:vertical-rl]">{name}</span>
                    </button>
                ))}
            </div>
        </div>
    </section>
);

/* ---------- timeline ---------- */

const FRAME_END = 260;
const frames = Array.from({ length: 13 }, (_, i) => i * 20);

const TimelineSelect = ({ label, className }) => (
    <div className={`relative flex items-center ${className}`}>
        <select aria-label={label} className="h-[27px] w-full appearance-none bg-transparent pl-[11px]">
            <option>{label}</option>
        </select>
        <Chevron className="pointer-events-none absolute right-0.5" />
    </div>
);

const Timeline = () => (
    <section className="flex h-[68px] shrink-0 flex-col overflow-hidden rounded-t-md bg-[#282828]">
        <div className="flex h-[38px] items-center bg-[#383838] pl-3 pr-[13px]">
            <IconMenu icon="time" label="Editor type" />
            <div className="ml-2 flex h-[29px] overflow-hidden rounded-[5px] border border-[#424242] bg-[#282828]">
                <TimelineSelect label="Reproducción" className="w-[145px] border-r border-[#424242]" />
                <TimelineSelect label="Claves" className="w-[88px]" />
            </div>
            <button className="ml-[13px]">Vista</button>
            <button className="ml-[22px]">Marcador</button>
            <div className="flex-[201]" />
            <div className="flex h-7 w-[58px] overflow-hidden rounded-[5px] bg-[#303030]">
                <button aria-label="Auto keying" className="flex w-7 items-center justify-center bg-[#575757]">
                    <Icon name="record" />
                </button>
                <button aria-label="Auto keying options" className="flex flex-1 items-center justify-center text-[#555]">
                    <Chevron />
                </button>
            </div>
            <div className="ml-[9px] flex h-7 gap-px overflow-hidden rounded-[5px] bg-[#444]">
                {['first', 'prevKey', 'playBack', 'play', 'nextKey', 'last'].map((icon) => (
                    <button key={icon} aria-label={icon} className="flex w-[29px] items-center justify-center bg-[#575757]">
                        <Icon name={icon} className="size-[18px] overflow-visible" />
                    </button>
                ))}
            </div>
            <div className="flex-[268]" />
            <input aria-label="Current frame" defaultValue="89" className="h-[29px] w-[110px] rounded-[5px] bg-[#575757] text-center" />
            <div className="ml-[9px] flex h-[29px] gap-px overflow-hidden rounded-[5px] bg-[#444]">
                <button aria-label="Preview range" className="flex w-7 items-center justify-center bg-[#575757]">
                    <Icon name="stopwatch" className="size-[22px]" />
                </button>
                <label className="flex w-[136px] items-center bg-[#575757] pl-[23px] pr-[21px]">
                    Inicio
                    <input defaultValue="1" className="w-0 min-w-0 flex-1 bg-transparent text-right" />
                </label>
                <label className="flex w-[121px] items-center bg-[#575757] pl-[23px] pr-[21px]">
                    Fin
                    <input defaultValue="165" className="w-0 min-w-0 flex-1 bg-transparent text-right" />
                </label>
            </div>
        </div>
        {/* Ruler, mostly covered by its scroll bar */}
        <div className="relative h-[30px] overflow-hidden bg-[#262626]">
            <div className="absolute inset-y-0 left-[57px] right-[560px] bg-[#2a2a2a]" />
            <div className="absolute left-[51px] right-0 top-2 h-5">
                {frames.map((f) => (
                    <span
                        key={f}
                        className="absolute -translate-x-1/2 text-[#989898]"
                        style={{ left: `${(f / FRAME_END) * 100}%` }}
                    >
                        {f}
                    </span>
                ))}
                <span
                    className="absolute -top-1 flex h-[26px] w-9 -translate-x-1/2 justify-center rounded-[5px] bg-[#4f76b3] pt-[3px] text-white"
                    style={{ left: `${(89 / FRAME_END) * 100}%` }}
                >
                    89
                </span>
            </div>
            <div className="absolute inset-x-3 top-3 flex h-[15px] items-center justify-between rounded-full border border-[#4c4c4c] bg-[#666] px-px">
                <span className="size-[11px] rounded-full border border-[#888] bg-[#383838]" />
                <span className="size-[11px] rounded-full border border-[#888] bg-[#383838]" />
            </div>
        </div>
    </section>
);

/* ---------- outliner ---------- */

const Outliner = () => (
    <section className="flex h-[292px] shrink-0 flex-col overflow-hidden rounded-md bg-[#282828]">
        <div className="flex h-[38px] shrink-0 items-center bg-[#383838] px-3">
            <IconMenu icon="tree" label="Editor type" className="w-[47px]" />
            <IconMenu icon="layers" label="Display mode" className="ml-2 w-[47px]" />
            <label className="relative ml-auto mr-2 flex w-[173px] items-center">
                <Icon name="search" className="absolute left-1.5 size-[22px]" />
                <input type="search" aria-label="Filter outliner" className={`${field} w-full pl-9`} />
            </label>
        </div>
        <div className="flex h-[31px] shrink-0 items-center gap-[11px] pl-[34px] pt-0.5">
            <Icon name="collection" className="size-[21px]" />
            <span className="w-[168px] overflow-hidden whitespace-nowrap pt-0.5">Colecciones de la es</span>
        </div>
        <div className="flex h-[30px] shrink-0 items-center bg-[#2c2c2c] pl-[39px] pr-[17px]">
            <Triangle open />
            <span className="ml-3 flex size-7 items-center justify-center rounded-md border border-[#6a6a6a] bg-[#505050]">
                <Icon name="collection" className="size-[21px]" />
            </span>
            <span className="ml-[7px] pt-1">Collection</span>
            <span className="relative ml-auto flex size-4 items-center justify-center">
                <input type="checkbox" aria-label="Exclude from view layer" defaultChecked className="size-4 appearance-none rounded-[2px] bg-[#dcdcdc]" />
                <svg viewBox="0 0 16 16" className="pointer-events-none absolute size-4" aria-hidden="true">
                    <path d="M3 8l4 4 6-8" fill="none" stroke="#222" strokeWidth="2.2" />
                </svg>
            </span>
            <button aria-label="Hide" className="ml-3"><Icon name="eye" /></button>
            <button aria-label="Disable in renders" className="ml-[9px]"><Icon name="photo" /></button>
        </div>
        <div className="flex h-[30px] shrink-0 items-center pl-11 pr-[17px]">
            <span className="mr-6 h-4 w-px bg-[#5a5a5a]" />
            <Triangle />
            <Icon name="empty" className="ml-3.5 size-[22px] text-[#c98a50]" />
            <span className="ml-[11px] pt-1">Pose</span>
            <span className="relative ml-[33px]">
                <Icon name="empty" className="size-[22px] text-[#c98a50]" />
                <span className="absolute -right-1.5 -bottom-[3px] flex size-[15px] items-center justify-center rounded-full bg-[#141414] text-[13px] text-white">4</span>
            </span>
            <span className="ml-2 h-1 w-px self-start bg-[#c98a50] mt-1" />
            <button aria-label="Hide" className="ml-auto"><Icon name="eye" /></button>
            <button aria-label="Disable in renders" className="ml-[9px]"><Icon name="photo" /></button>
        </div>
        {[0, 1, 2, 3, 4].map((i) => (
            <div key={i} className={`h-[30px] shrink-0 ${i % 2 === 0 ? 'bg-[#2c2c2c]' : 'bg-[#282828]'}`} />
        ))}
    </section>
);

/* ---------- properties ---------- */

const propTabs = [
    ['tools', ''],
    ['render', 'mt-3.5'],
    ['printer', 'mt-0.5'],
    ['layers', 'mt-0.5'],
    ['scene', 'mt-0.5'],
    ['world', 'mt-0.5 text-[#c4636b]'],
    ['box', 'mt-3.5'],
    ['texture', 'mt-[26px] text-[#c4636b]'],
];

const PropHeader = ({ open, checkbox, children }) => (
    <div className="flex h-9 items-center pl-[13px] pr-2.5">
        <Triangle open={open} />
        {checkbox && (
            <span className="relative ml-2 flex size-5 items-center justify-center">
                <input id="gravity" type="checkbox" defaultChecked className="size-5 appearance-none rounded-[3px] bg-[#4f76b3]" />
                <svg viewBox="0 0 20 20" className="pointer-events-none absolute size-5" aria-hidden="true">
                    <path d="M4.500 10.500l4 4 7-9.500" fill="none" stroke="#fff" strokeWidth="2.4" />
                </svg>
            </span>
        )}
        {checkbox ? (
            <label htmlFor="gravity" className="ml-1 text-[17px]">{children}</label>
        ) : (
            <button className="ml-2.5 min-w-0 whitespace-nowrap text-left text-[17px]">{children}</button>
        )}
        <Grip />
    </div>
);

const PropField = ({ id, icon, label, picker }) => (
    <div className="flex items-center pr-[11px]">
        <label htmlFor={id} className="w-[110px] text-right text-[#e6e6e6]">{label}</label>
        <span className="relative ml-[15px] flex flex-1 items-center">
            <Icon name={icon} className="absolute left-1.5 size-[22px] text-[#e6e6e6]" />
            <input id={id} className={`${field} w-full pl-9`} />
            {picker && <Icon name="dropper" className="absolute right-1.5 size-[22px] text-[#aaa]" />}
        </span>
    </div>
);

const Properties = () => (
    <section className="flex min-h-0 flex-1 flex-col overflow-hidden rounded-md bg-[#424242]">
        <div className="flex h-[38px] shrink-0 items-center bg-[#383838] pl-[13px] pr-[11px]">
            <IconMenu icon="toggles" label="Editor type" />
            <label className="relative ml-[35px] flex w-[173px] items-center">
                <Icon name="search" className="absolute left-1.5 size-[22px]" />
                <input type="search" aria-label="Search properties" className={`${field} w-full pl-9`} />
            </label>
            <button aria-label="Options" className={`${menuBtn} ml-auto w-[29px] justify-center`}>
                <Chevron />
            </button>
        </div>
        <div className="flex min-h-0 flex-1">
            <div role="tablist" aria-orientation="vertical" className="flex w-[42px] shrink-0 flex-col bg-[#202020] pl-0.5 pt-[13px]">
                {propTabs.map(([icon, extra]) => (
                    <button
                        key={icon}
                        role="tab"
                        aria-label={icon}
                        aria-selected={icon === 'scene'}
                        className={`flex h-10 items-center justify-center rounded-l-md ${icon === 'scene' ? 'bg-[#424242] text-white' : 'bg-[#2b2b2b]'} ${extra}`}
                    >
                        <Icon name={icon} className="size-[22px]" />
                    </button>
                ))}
            </div>
            <div className="min-w-0 flex-1">
                <div className="flex h-[54px] items-center pl-4 pr-4">
                    <Icon name="scene" className="size-[22px]" />
                    <span className="ml-[13px]">Scene</span>
                    <button aria-label="Pin" className="ml-auto text-[#999]">
                        <Icon name="pin" className="size-[22px]" />
                    </button>
                </div>
                <PropHeader open>Escena</PropHeader>
                <div className="flex h-32 flex-col gap-[9px] bg-[#393939] pt-[13px]">
                    <PropField id="camera" icon="object" label="Cámara" picker />
                    <PropField id="background" icon="scene" label="Escena de ..." />
                    <PropField id="clip" icon="clip" label="Clip activo" />
                </div>
                <PropHeader>Unidades</PropHeader>
                <PropHeader checkbox>Gravedad</PropHeader>
                <PropHeader>Conjuntos de claves</PropHeader>
                <PropHeader>Audio</PropHeader>
                <PropHeader>Entorno de cuerpos rígidos</PropHeader>
                <PropHeader>Propiedades personalizadas</PropHeader>
            </div>
        </div>
    </section>
);

/* ---------- status bar ---------- */

const StatusBar = () => (
    <footer className="mt-px flex h-[29px] shrink-0 items-center bg-[#303030] pl-4 pr-3.5 text-[#a6a6a6]">
        <div className="flex w-[205px] items-center gap-[9px] whitespace-nowrap"><Mouse button="left" />Cambiar fotograma</div>
        <div className="flex w-[215px] items-center gap-[11px] whitespace-nowrap"><Mouse button="left" drag />Marco de selección</div>
        <div className="flex w-[387px] items-center gap-2 whitespace-nowrap"><Mouse button="middle" />Desplazar vista</div>
        <div className="flex items-center gap-2 whitespace-nowrap"><Mouse button="right" />Planilla de tiempos - menú contextual</div>
        <span className="ml-auto">2.93.9</span>
    </footer>
);

const App = () => (
    <div className="flex h-screen flex-col overflow-hidden bg-[#1c1c1c] font-['DejaVu_Sans',sans-serif] text-[16px] leading-5 text-[#dcdcdc] [text-shadow:0_1px_1px_rgba(0,0,0,0.5)] [&_button]:[text-shadow:inherit] [&_input]:[text-shadow:inherit] [&_select]:[text-shadow:inherit]">
        <TopBar />
        <main className="flex min-h-0 flex-1 gap-[3px] px-px pt-0.5">
            <div className="flex min-w-0 flex-1 flex-col gap-[3px]">
                <Viewport />
                <Timeline />
            </div>
            <div className="flex w-[331px] shrink-0 flex-col gap-[3px]">
                <Outliner />
                <Properties />
            </div>
        </main>
        <StatusBar />
    </div>
);

export default App;
